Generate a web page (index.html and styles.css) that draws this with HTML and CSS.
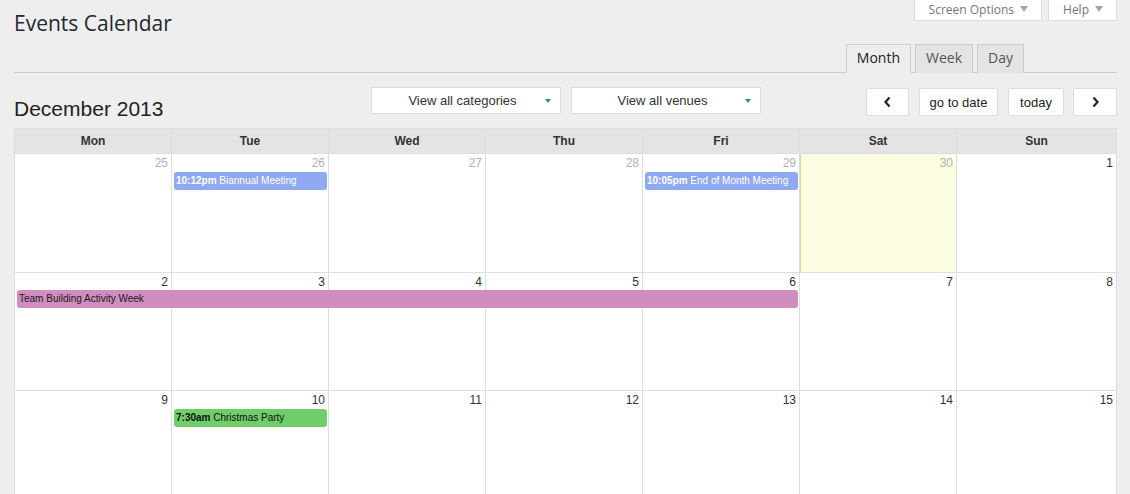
FILE: index.html
```html
<!DOCTYPE html>
<html lang="en">
<head>
    <meta charset="UTF-8">
    <title>Events Calendar</title>
    <link rel="stylesheet" href="styles.css">
</head>
<body>
    <div class="wrap">
        <div class="topbar">
            <h1>Events Calendar</h1>
            <div class="screen-meta">
                <span class="meta-link">Screen Options <i class="meta-arrow"></i></span>
                <span class="meta-link">Help <i class="meta-arrow"></i></span>
            </div>
        </div>

        <!-- Abas de visualização -->
        <div class="view-tabs">
            <span class="tab active">Month</span>
            <span class="tab">Week</span>
            <span class="tab">Day</span>
        </div>

        <div class="toolbar">
            <h2 class="month-title">December 2013</h2>
            <div class="filters">
                <div class="select">View all categories <i class="caret"></i></div>
                <div class="select">View all venues <i class="caret"></i></div>
            </div>
            <div class="nav-buttons">
                <button class="btn btn-prev">
                    <svg width="9" height="12" viewBox="0 0 9 12"><path d="M6.5 1.5 L2.5 6 L6.5 10.5" fill="none" stroke="#222" stroke-width="2.2"/></svg>
                </button>
                <button class="btn btn-goto">go to date</button>
                <button class="btn btn-today">today</button>
                <button class="btn btn-next">
                    <svg width="9" height="12" viewBox="0 0 9 12"><path d="M2.5 1.5 L6.5 6 L2.5 10.5" fill="none" stroke="#222" stroke-width="2.2"/></svg>
                </button>
            </div>
        </div>

        <div class="calendar">
            <div class="cal-head">
                <div>Mon</div><div>Tue</div><div>Wed</div><div>Thu</div><div>Fri</div><div>Sat</div><div>Sun</div>
            </div>
            <div id="weeks"></div>
        </div>
    </div>

    <script>
        document.addEventListener('DOMContentLoaded', () => {
            // Semanas do mês: [numero, outroMes, hoje]
            const semanas = [
                { dias: [[25,1],[26,1],[27,1],[28,1],[29,1],[30,1,1],[1]],
                  eventos: [
                    { col: 2, span: 1, hora: '10:12pm', titulo: 'Biannual Meeting', cor: 'blue' },
                    { col: 5, span: 1, hora: '10:05pm', titulo: 'End of Month Meeting', cor: 'blue' }
                  ] },
                { dias: [[2],[3],[4],[5],[6],[7],[8]],
                  eventos: [
                    { col: 1, span: 5, hora: '', titulo: 'Team Building Activity Week', cor: 'pink' }
                  ] },
                { dias: [[9],[10],[11],[12],[13],[14],[15]],
                  eventos: [
                    { col: 2, span: 1, hora: '7:30am', titulo: 'Christmas Party', cor: 'green' }
                  ] }
            ];

            const container = document.getElementById('weeks');

            semanas.forEach(semana => {
                const linha = document.createElement('div');
                linha.className = 'week';

                semana.dias.forEach((dia, i) => {
                    const cel = document.createElement('div');
                    cel.className = 'day' + (dia[1] ? ' other' : '') + (dia[2] ? ' today' : '');
                    cel.style.gridColumn = (i + 1);
                    cel.innerHTML = `<span class="num">${dia[0]}</span>`;
                    linha.appendChild(cel);
                });

                semana.eventos.forEach(ev => {
                    const el = document.createElement('div');
                    el.className = 'event ' + ev.cor;
                    el.style.gridColumn = `${ev.col} / span ${ev.span}`;
                    el.innerHTML = (ev.hora ? `<b>${ev.hora}</b> ` : '') + ev.titulo;
                    linha.appendChild(el);
                });

                container.appendChild(linha);
            });
        });
    </script>
</body>
</html>
```

FILE: styles.css
```css
* {
    margin: 0;
    padding: 0;
    box-sizing: border-box;
}

body {
    font-family: "Liberation Sans", Arial, sans-serif;
    background-color: #eeeeee;
    color: #222;
}

.wrap {
    padding: 0 13px 0 14px;
}

/* Cabeçalho */
.topbar {
    display: flex;
    justify-content: space-between;
    align-items: flex-start;
}

h1 {
    font-family: "Open Sans", sans-serif;
    font-weight: 400;
    font-size: 21px;
    line-height: 29px;
    color: #23282d;
    margin-top: 9px;
}

.screen-meta {
    display: flex;
    gap: 6px;
    margin-top: -1px;
}

.meta-link {
    font-family: "Open Sans", sans-serif;
    font-size: 12px;
    color: #72777c;
    background-color: #fff;
    border: 1px solid #ddd;
    border-top: none;
    height: 22px;
    padding: 0 13px 1px 14px;
    display: flex;
    align-items: center;
    gap: 6px;
}

.meta-arrow {
    width: 0;
    height: 0;
    border-left: 4px solid transparent;
    border-right: 4px solid transparent;
    border-top: 6px solid #a0a5aa;
}

.view-tabs {
    display: flex;
    justify-content: flex-end;
    gap: 4px;
    padding-right: 93px;
    margin-top: 6px;
    border-bottom: 1px solid #ccc;
}

.tab {
    font-family: "Open Sans", sans-serif;
    font-size: 14px;
    line-height: 26px;
    padding: 0 10px;
    border: 1px solid #ccc;
    border-bottom: none;
    background-color: #e4e4e4;
    color: #555;
    margin-bottom: -1px;
    height: 29px;
}

.tab.active {
    background-color: #eeeeee;
    color: #222;
    border-bottom: 1px solid #eeeeee;
}

/* Barra de ferramentas */
.toolbar {
    display: grid;
    grid-template-columns: 1fr auto 1fr;
    align-items: start;
    margin-top: 14px;
    height: 41px;
}

.month-title {
    font-size: 21px;
    font-weight: 400;
    color: #222;
    margin-top: 10px;
}

.filters {
    display: flex;
    gap: 10px;
}

.select {
    width: 190px;
    height: 27px;
    background-color: #fff;
    border: 1px solid #ddd;
    font-size: 13px;
    color: #333;
    display: flex;
    align-items: center;
    justify-content: center;
    padding-right: 6px;
    position: relative;
}

.caret {
    position: absolute;
    right: 9px;
    top: 11px;
    border-left: 3.5px solid transparent;
    border-right: 3.5px solid transparent;
    border-top: 4px solid #2e86ab;
}

.nav-buttons {
    display: flex;
    justify-content: flex-end;
    gap: 10px;
    margin-top: 1px;
}

.btn {
    font-family: "Liberation Sans", Arial, sans-serif;
    height: 28px;
    background-color: #fff;
    border: 1px solid #ddd;
    font-size: 13px;
    color: #222;
    border-radius: 2px;
    display: flex;
    align-items: center;
    justify-content: center;
}

.btn-prev { width: 43px; }
.btn-goto { width: 79px; }
.btn-today { width: 56px; margin-right: -1px; }
.btn-next { width: 44px; }

/* Calendário */
.calendar {
    border-left: 1px solid #ddd;
    border-top: 1px solid #ddd;
}

.cal-head,
.week {
    display: grid;
    grid-template-columns: repeat(6, 157px) 1fr;
}

.cal-head {
    background-color: #e4e4e4;
}

.cal-head div {
    text-align: center;
    font-size: 12px;
    font-weight: bold;
    color: #333;
    height: 25px;
    line-height: 24px;
    border-right: 1px solid #ddd;
    border-bottom: 1px solid #ddd;
}

.week {
    grid-template-rows: 18px 18px 1fr;
    height: 118.5px;
}

.week + .week {
    grid-template-rows: 17.5px 18px 1fr;
}

.day {
    grid-row: 1 / 4;
    background-color: #fff;
    border-right: 1px solid #ddd;
    border-bottom: 1px solid #ddd;
    text-align: right;
    padding: 2px 3px 0 0;
    font-size: 12px;
    color: #333;
}

.day.other .num {
    color: #b0b0b0;
}

.day.today {
    background-color: #fdfde2;
    box-shadow: inset 1px 0 0 #e0d890;
}

.event {
    grid-row: 2;
    margin: 0 2px;
    height: 18px;
    border-radius: 3px;
    font-size: 10px;
    line-height: 18px;
    padding: 0 2px;
    white-space: nowrap;
    overflow: hidden;
}

.event.blue {
    background-color: #8fa9f0;
    color: #fff;
}

.event.pink {
    background-color: #cf8dc0;
    color: #1a1a1a;
}

.event.green {
    background-color: #6fce6a;
    color: #111;
}
```
